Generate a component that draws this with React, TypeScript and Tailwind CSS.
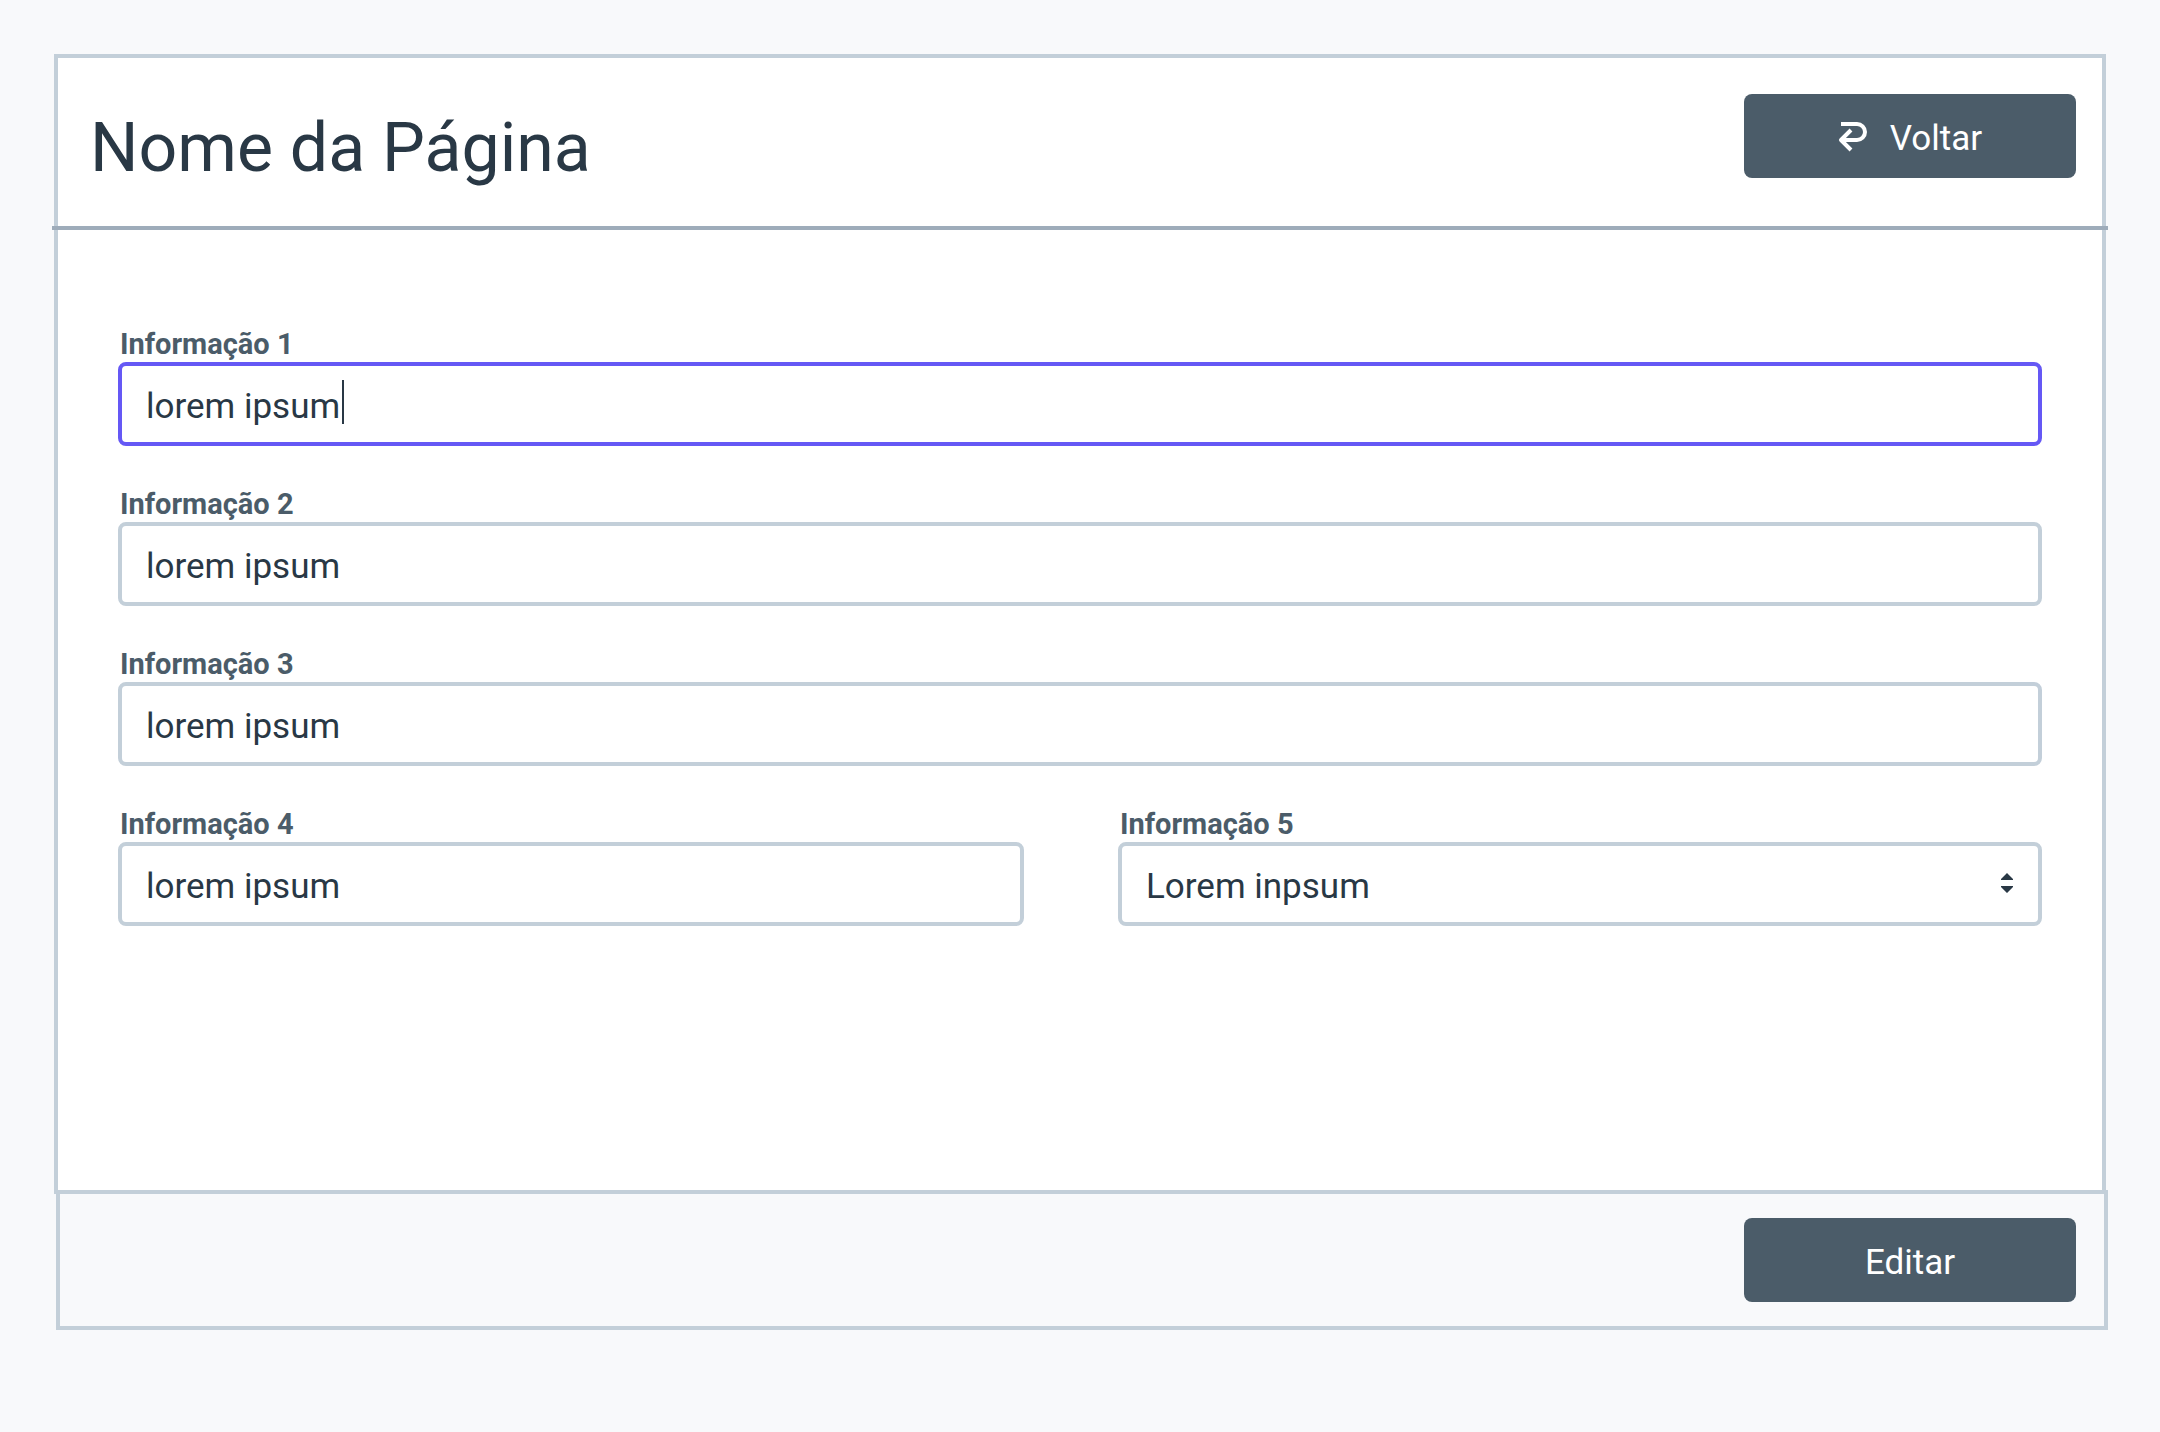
import { useState } from "react";
import type { ReactNode } from "react";

const controlClass =
  "block h-[84px] w-full appearance-none rounded-lg border-4 bg-white px-6 text-[35px] text-[#293845] outline-none";

function Field({ id, label, children }: { id: string; label: string; children: ReactNode }) {
  return (
    <div>
      <label htmlFor={id} className="block pl-0.5 text-[29px] leading-9 font-bold text-[#4b5c69]">
        {label}
      </label>
      <div className="relative">{children}</div>
    </div>
  );
}

function TextField({ id, label, active = false }: { id: string; label: string; active?: boolean }) {
  const [value, setValue] = useState("lorem ipsum");
  return (
    <Field id={id} label={label}>
      <input
        id={id}
        type="text"
        value={value}
        onChange={(e) => setValue(e.target.value)}
        className={`${controlClass} pt-1 ${active ? "border-[#6558f5] caret-transparent" : "border-[#c3cfd9]"}`}
      />
      {active && (
        <span aria-hidden="true" className="absolute top-[18px] left-56 h-11 w-0.5 bg-[#293845]" />
      )}
    </Field>
  );
}

function ReturnIcon() {
  return (
    <svg width="30" height="32" viewBox="0 0 30 32" fill="none" stroke="currentColor" strokeWidth="4" aria-hidden="true">
      <path d="M3 4H19a8 8 0 0 1 0 16H4" />
      <path d="M13 10L3 20L13 30" strokeLinejoin="round" />
    </svg>
  );
}

function Button({ children }: { children: ReactNode }) {
  return (
    <button
      type="button"
      className="flex h-[84px] w-[332px] shrink-0 items-center justify-center gap-[22px] rounded-lg bg-[#4b5c69] text-[35px] text-white"
    >
      {children}
    </button>
  );
}

export default function App() {
  return (
    <main className="min-h-screen bg-[#f8f9fb] p-[54px] font-['Roboto',sans-serif] text-[#293845]">
      <section className="border-4 border-[#c3cfd9] bg-white">
        <header className="-mx-1.5 flex items-start justify-between border-b-4 border-[#9eacba] pt-9 pr-8 pb-6 pl-[38px]">
          <h1 className="text-[68px] leading-[108px]">Nome da Página</h1>
          <Button>
            <ReturnIcon />
            <span className="pt-1.5">Voltar</span>
          </Button>
        </header>
        <form className="grid grid-cols-1 gap-y-10 px-15 pt-24 pb-66">
          <TextField id="info-1" label="Informação 1" active />
          <TextField id="info-2" label="Informação 2" />
          <TextField id="info-3" label="Informação 3" />
          <div className="grid grid-cols-[906fr_924fr] gap-x-[94px]">
            <TextField id="info-4" label="Informação 4" />
            <Field id="info-5" label="Informação 5">
              <select id="info-5" className={`${controlClass} border-[#c3cfd9] pt-1.5`}>
                <option>Lorem inpsum</option>
              </select>
              <svg
                width="12"
                height="20"
                viewBox="0 0 12 20"
                fill="#293845"
                className="pointer-events-none absolute top-[31px] right-[29px]"
                aria-hidden="true"
              >
                <path d="M6 0L12 6V7H0V6ZM6 20L12 14V13H0V14Z" />
              </svg>
            </Field>
          </div>
        </form>
      </section>
      <footer className="-mt-1 -mr-0.5 ml-0.5 flex justify-end border-4 border-[#c3cfd9] bg-[#f8f9fb] px-7 py-6">
        <Button>
          <span className="pt-1.5">Editar</span>
        </Button>
      </footer>
    </main>
  );
}
